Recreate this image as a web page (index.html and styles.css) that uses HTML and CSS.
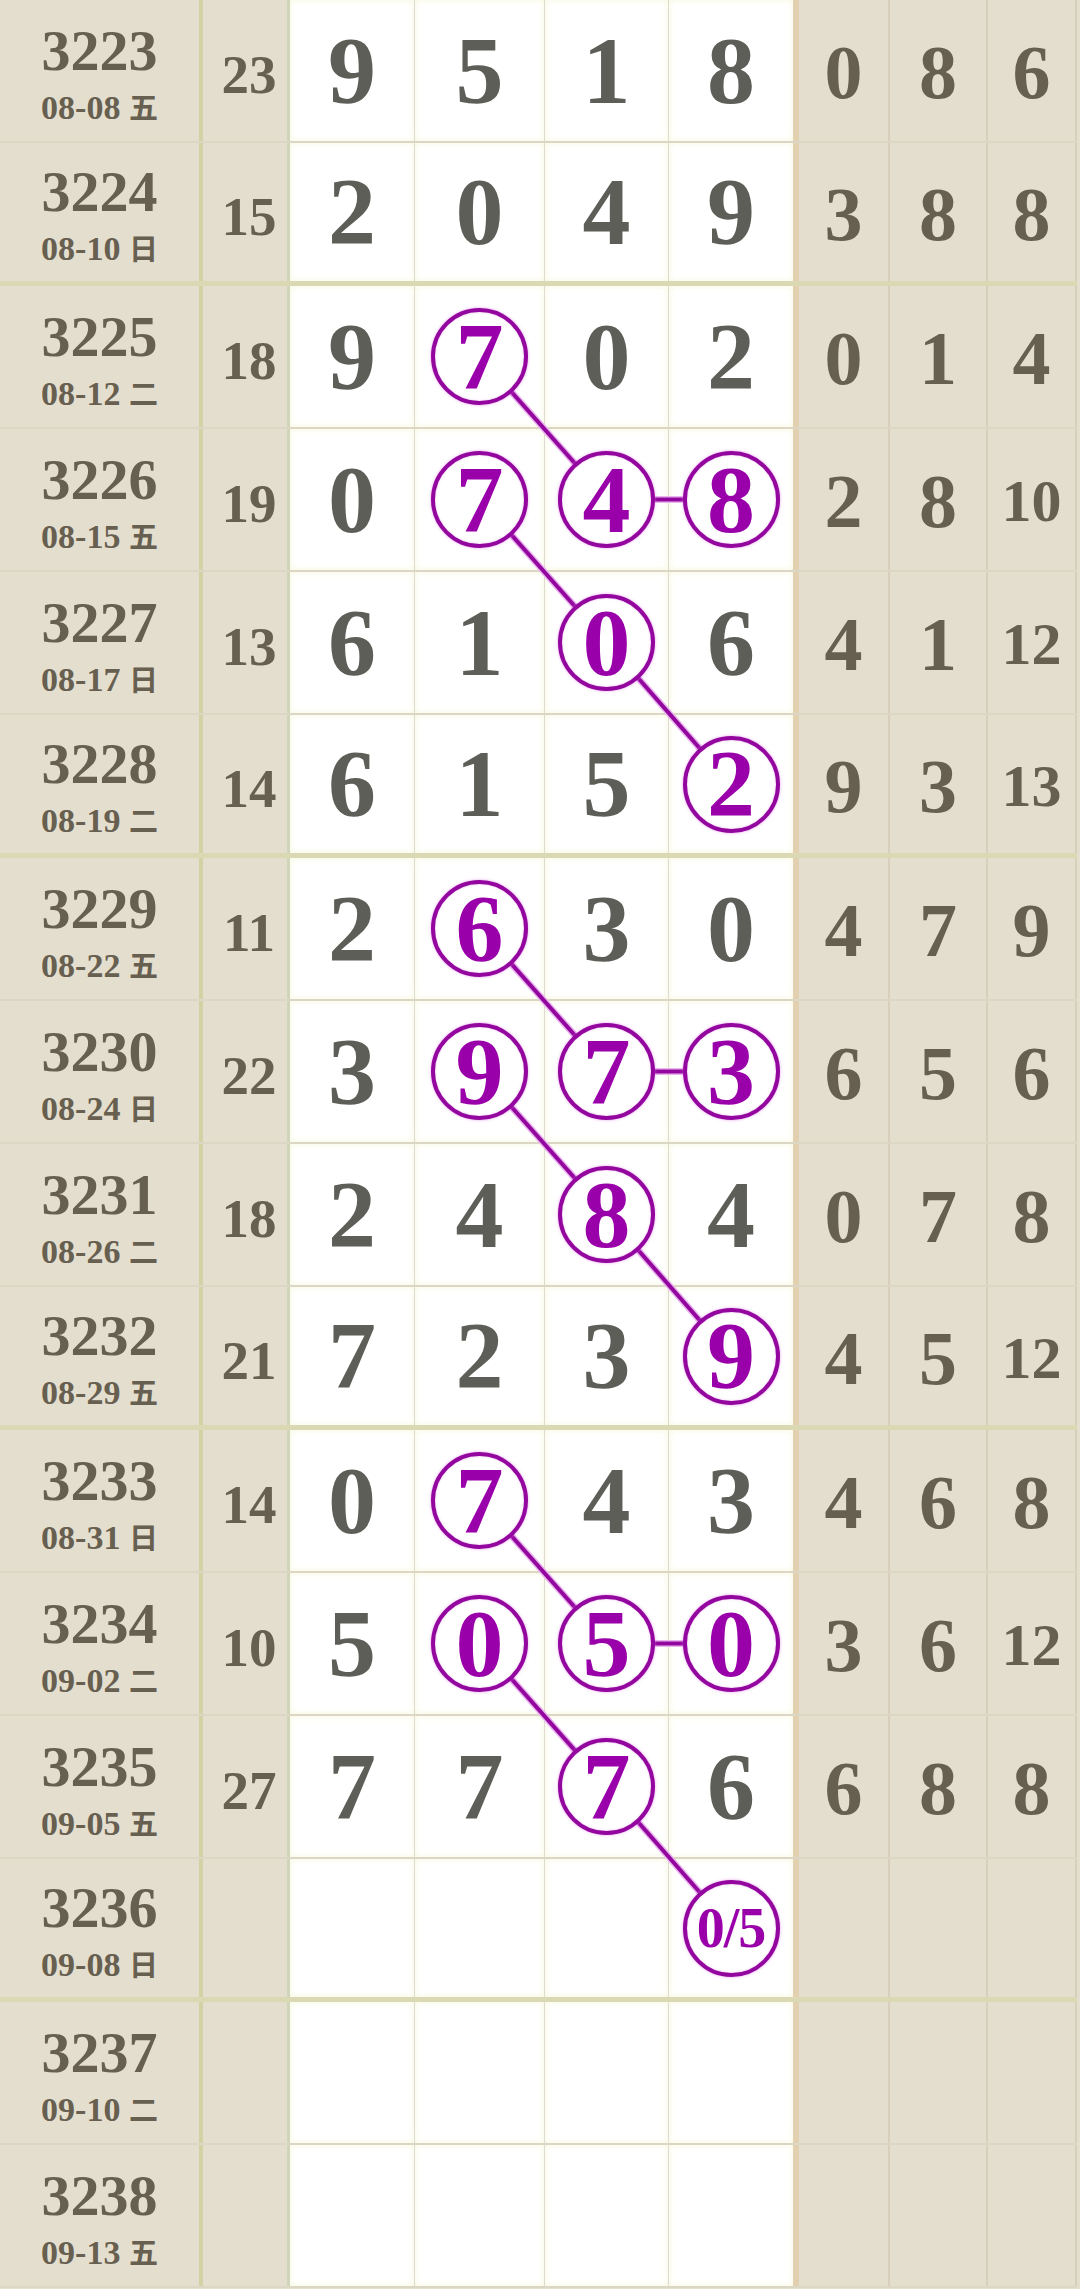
FILE: index.html
```html
<!DOCTYPE html>
<html lang="zh-CN">
<head>
    <meta charset="UTF-8">
    <meta name="viewport" content="width=device-width, initial-scale=1.0">
    <title>走势图</title>
    <link rel="stylesheet" href="styles.css">
</head>
<body>
<div class="chart">
    <div class="row">
        <div class="qi"><b>3223</b><small>08-08 <i>五</i></small></div>
        <div class="he">23</div>
        <div class="n">9</div><div class="n">5</div><div class="n">1</div><div class="n last">8</div>
        <div class="r">0</div><div class="r">8</div><div class="r">6</div>
    </div>
    <div class="row end">
        <div class="qi"><b>3224</b><small>08-10 <i>日</i></small></div>
        <div class="he">15</div>
        <div class="n">2</div><div class="n">0</div><div class="n">4</div><div class="n last">9</div>
        <div class="r">3</div><div class="r">8</div><div class="r">8</div>
    </div>

    <div class="row">
        <div class="qi"><b>3225</b><small>08-12 <i>二</i></small></div>
        <div class="he">18</div>
        <div class="n">9</div><div class="n"><span class="ball">7</span></div><div class="n">0</div><div class="n last">2</div>
        <div class="r">0</div><div class="r">1</div><div class="r">4</div>
    </div>
    <div class="row">
        <div class="qi"><b>3226</b><small>08-15 <i>五</i></small></div>
        <div class="he">19</div>
        <div class="n">0</div><div class="n"><span class="ball">7</span></div><div class="n"><span class="ball">4</span></div><div class="n last"><span class="ball">8</span></div>
        <div class="r">2</div><div class="r">8</div><div class="r two">10</div>
    </div>
    <div class="row">
        <div class="qi"><b>3227</b><small>08-17 <i>日</i></small></div>
        <div class="he">13</div>
        <div class="n">6</div><div class="n">1</div><div class="n"><span class="ball">0</span></div><div class="n last">6</div>
        <div class="r">4</div><div class="r">1</div><div class="r two">12</div>
    </div>
    <div class="row end">
        <div class="qi"><b>3228</b><small>08-19 <i>二</i></small></div>
        <div class="he">14</div>
        <div class="n">6</div><div class="n">1</div><div class="n">5</div><div class="n last"><span class="ball">2</span></div>
        <div class="r">9</div><div class="r">3</div><div class="r two">13</div>
    </div>

    <div class="row">
        <div class="qi"><b>3229</b><small>08-22 <i>五</i></small></div>
        <div class="he">11</div>
        <div class="n">2</div><div class="n"><span class="ball">6</span></div><div class="n">3</div><div class="n last">0</div>
        <div class="r">4</div><div class="r">7</div><div class="r">9</div>
    </div>
    <div class="row">
        <div class="qi"><b>3230</b><small>08-24 <i>日</i></small></div>
        <div class="he">22</div>
        <div class="n">3</div><div class="n"><span class="ball">9</span></div><div class="n"><span class="ball">7</span></div><div class="n last"><span class="ball">3</span></div>
        <div class="r">6</div><div class="r">5</div><div class="r">6</div>
    </div>
    <div class="row">
        <div class="qi"><b>3231</b><small>08-26 <i>二</i></small></div>
        <div class="he">18</div>
        <div class="n">2</div><div class="n">4</div><div class="n"><span class="ball">8</span></div><div class="n last">4</div>
        <div class="r">0</div><div class="r">7</div><div class="r">8</div>
    </div>
    <div class="row end">
        <div class="qi"><b>3232</b><small>08-29 <i>五</i></small></div>
        <div class="he">21</div>
        <div class="n">7</div><div class="n">2</div><div class="n">3</div><div class="n last"><span class="ball">9</span></div>
        <div class="r">4</div><div class="r">5</div><div class="r two">12</div>
    </div>

    <div class="row">
        <div class="qi"><b>3233</b><small>08-31 <i>日</i></small></div>
        <div class="he">14</div>
        <div class="n">0</div><div class="n"><span class="ball">7</span></div><div class="n">4</div><div class="n last">3</div>
        <div class="r">4</div><div class="r">6</div><div class="r">8</div>
    </div>
    <div class="row">
        <div class="qi"><b>3234</b><small>09-02 <i>二</i></small></div>
        <div class="he">10</div>
        <div class="n">5</div><div class="n"><span class="ball">0</span></div><div class="n"><span class="ball">5</span></div><div class="n last"><span class="ball">0</span></div>
        <div class="r">3</div><div class="r">6</div><div class="r two">12</div>
    </div>
    <div class="row">
        <div class="qi"><b>3235</b><small>09-05 <i>五</i></small></div>
        <div class="he">27</div>
        <div class="n">7</div><div class="n">7</div><div class="n"><span class="ball">7</span></div><div class="n last">6</div>
        <div class="r">6</div><div class="r">8</div><div class="r">8</div>
    </div>
    <div class="row end">
        <div class="qi"><b>3236</b><small>09-08 <i>日</i></small></div>
        <div class="he"></div>
        <div class="n"></div><div class="n"></div><div class="n"></div><div class="n last"><span class="ball half">0/5</span></div>
        <div class="r"></div><div class="r"></div><div class="r"></div>
    </div>

    <div class="row">
        <div class="qi"><b>3237</b><small>09-10 <i>二</i></small></div>
        <div class="he"></div>
        <div class="n"></div><div class="n"></div><div class="n"></div><div class="n last"></div>
        <div class="r"></div><div class="r"></div><div class="r"></div>
    </div>
    <div class="row">
        <div class="qi"><b>3238</b><small>09-13 <i>五</i></small></div>
        <div class="he"></div>
        <div class="n"></div><div class="n"></div><div class="n"></div><div class="n last"></div>
        <div class="r"></div><div class="r"></div><div class="r"></div>
    </div>

    <!-- connecting lines, drawn under the balls -->
    <svg class="links" width="1080" height="2288" viewBox="0 0 1080 2288">
        <g class="glow">
            <line x1="480" y1="356.5" x2="607" y2="499.5"/>
            <line x1="607" y1="499.5" x2="731" y2="499.5"/>
            <line x1="480" y1="499.5" x2="607" y2="642.5"/>
            <line x1="607" y1="642.5" x2="731" y2="784"/>
            <line x1="480" y1="928.5" x2="607" y2="1071.5"/>
            <line x1="607" y1="1071.5" x2="731" y2="1071.5"/>
            <line x1="480" y1="1071.5" x2="607" y2="1214.5"/>
            <line x1="607" y1="1214.5" x2="731" y2="1356"/>
            <line x1="480" y1="1500.5" x2="607" y2="1643.5"/>
            <line x1="607" y1="1643.5" x2="731" y2="1643.5"/>
            <line x1="480" y1="1643.5" x2="607" y2="1786.5"/>
            <line x1="607" y1="1786.5" x2="731" y2="1928"/>
        </g>
        <g class="stroke">
            <line x1="480" y1="356.5" x2="607" y2="499.5"/>
            <line x1="607" y1="499.5" x2="731" y2="499.5"/>
            <line x1="480" y1="499.5" x2="607" y2="642.5"/>
            <line x1="607" y1="642.5" x2="731" y2="784"/>
            <line x1="480" y1="928.5" x2="607" y2="1071.5"/>
            <line x1="607" y1="1071.5" x2="731" y2="1071.5"/>
            <line x1="480" y1="1071.5" x2="607" y2="1214.5"/>
            <line x1="607" y1="1214.5" x2="731" y2="1356"/>
            <line x1="480" y1="1500.5" x2="607" y2="1643.5"/>
            <line x1="607" y1="1643.5" x2="731" y2="1643.5"/>
            <line x1="480" y1="1643.5" x2="607" y2="1786.5"/>
            <line x1="607" y1="1786.5" x2="731" y2="1928"/>
        </g>
    </svg>
</div>
</body>
</html>
```

FILE: styles.css
```css
body {
    margin: 0;
    background: #e4dece;
    font-family: "Liberation Serif", "Noto Sans CJK SC", serif;
    font-weight: bold;
}

.chart {
    position: relative;
    width: 1077px;
}

.row {
    display: grid;
    grid-template-columns: 203px 87px 125px 130px 124px 130px 91px 98px 89px;
    height: 143px;
    box-sizing: border-box;
    border-bottom: 2px solid #dcd6c4;
}
.row.end {
    border-bottom: 5px solid #dad9b3;
}

.row > div {
    display: flex;
    justify-content: center;
    align-items: center;
    line-height: 1;
}

/* period + date */
.qi {
    flex-direction: column;
    color: #675f50;
    border-right: 4px solid #d4d2a4;
    padding-top: 5px;
    box-sizing: border-box;
}
.qi b {
    font-size: 58px;
}
.qi small {
    font-size: 34px;
    margin-top: 11px;
}
.qi i {
    font-style: normal;
    font-family: "Noto Sans CJK SC", sans-serif;
    font-weight: 700;
    font-size: 29px;
}

/* sum */
.he {
    color: #675f50;
    font-size: 55px;
    border-right: 3px solid #cfd5b8;
    padding: 8px 0 0 8px;
    box-sizing: border-box;
}

/* main digits */
.n {
    background: #fff;
    color: #5e5e58;
    font-size: 96px;
    border-right: 1px solid #dedbd0;
    box-shadow: inset 0 0 6px rgba(244, 244, 205, 0.7);
}
.n.last {
    border-right: 6px solid #e2d0b0;
}

/* right stats */
.r {
    color: #675f50;
    font-size: 76px;
    border-right: 2px solid #d7cfbc;
    padding-top: 3px;
    box-sizing: border-box;
}
.r.two {
    font-size: 60px;
}

.ball {
    position: relative;
    z-index: 2;
    width: 89px;
    height: 89px;
    border: 4px solid #93079f;
    border-radius: 50%;
    background: #fff;
    color: #9a00aa;
    display: flex;
    justify-content: center;
    align-items: center;
    box-shadow: 0 0 3px rgba(222, 110, 235, 0.7), inset 0 0 2px rgba(222, 110, 235, 0.5);
}
.ball.half {
    font-size: 56px;
    letter-spacing: -1px;
}

.links {
    position: absolute;
    top: 0;
    left: 0;
    z-index: 1;
    pointer-events: none;
}
.links .glow line {
    stroke: #eab6ef;
    stroke-width: 7;
}
.links .stroke line {
    stroke: #93079f;
    stroke-width: 4;
}
```
